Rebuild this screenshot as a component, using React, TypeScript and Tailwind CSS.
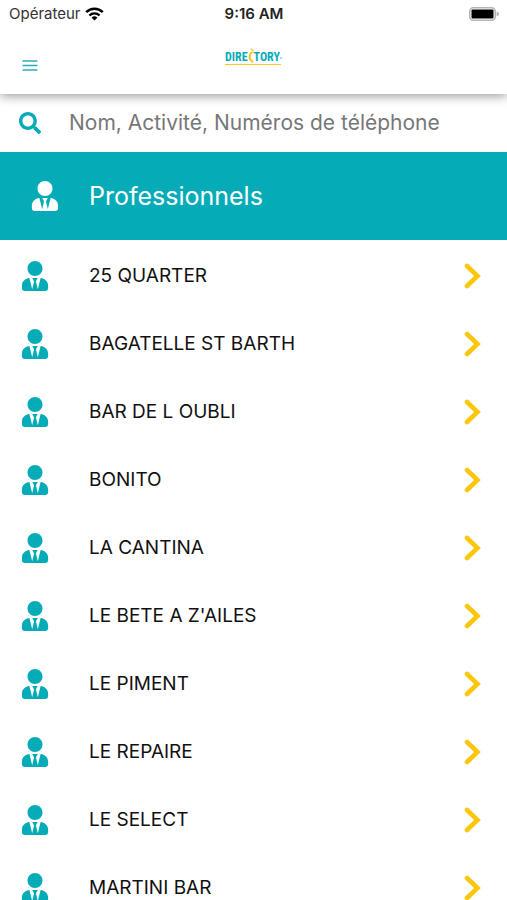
import { FaSearch, FaUserTie } from 'react-icons/fa';

const professionals = [
  '25 QUARTER',
  'BAGATELLE ST BARTH',
  'BAR DE L OUBLI',
  'BONITO',
  'LA CANTINA',
  "LE BETE A Z'AILES",
  'LE PIMENT',
  'LE REPAIRE',
  'LE SELECT',
  'MARTINI BAR',
];

function StatusBar() {
  return (
    <div className="grid h-7 grid-cols-3 items-center pr-2 pl-[9px] text-[15px] leading-5">
      <div className="flex items-center gap-1 text-[#333]">
        <span>Opérateur</span>
        <svg className="h-[14px] w-[19px]" viewBox="0 0 19 14" fill="none">
          <path d="M1.2 5.2a11.8 11.8 0 0116.6 0" stroke="#000" strokeWidth="2.6" />
          <path d="M4.4 8.5a7.2 7.2 0 0110.2 0" stroke="#000" strokeWidth="2.4" />
          <path d="M9.5 13.6L6.6 10.7a4.1 4.1 0 015.8 0z" fill="#000" />
        </svg>
      </div>
      <div className="text-center font-semibold text-[#222]">9:16 AM</div>
      <svg className="h-[14px] w-[30px] justify-self-end" viewBox="0 0 30 14">
        <rect x="0.8" y="0.8" width="25.4" height="12.4" rx="3.5" fill="#fff" stroke="#b5b5b5" strokeWidth="1.6" />
        <rect x="2.5" y="2.5" width="22" height="9" rx="1" fill="#000" />
        <path d="M27.6 4.6c1.6.6 2.4 1.4 2.4 2.4s-.8 1.8-2.4 2.4z" fill="#b5b5b5" />
      </svg>
    </div>
  );
}

function Logo() {
  return (
    <div className="flex flex-col items-center">
      <div className="flex items-end font-['Liberation_Sans_Narrow','Roboto_Condensed',sans-serif] text-[12px] leading-[14px] font-bold text-[#05acb8]">
        <span>DIRE</span>
        <svg className="h-4 w-[6px]" viewBox="0 0 6 16" fill="none">
          <path d="M4.4 4.2C.6 6.2.6 11.4 4.4 13.6" stroke="#fbc524" strokeWidth="2" strokeLinecap="round" />
          <path d="M3 1l2.4 1.6" stroke="#fbc524" strokeWidth="1.2" strokeLinecap="round" />
        </svg>
        <span>TORY</span>
        <svg className="h-[5px] w-0.5 self-center" viewBox="0 0 2 5">
          <circle cx="1" cy="4" r=".7" fill="#05acb8" />
        </svg>
      </div>
      <div className="h-px w-14 bg-[#fbc524]" />
    </div>
  );
}

function ChevronIcon() {
  return (
    <svg className="h-[26px] w-[17px]" viewBox="0 0 17 26" fill="none">
      <path d="M3 3l10.5 10L3 23" stroke="#fdc60b" strokeWidth="4.6" strokeLinecap="round" />
    </svg>
  );
}

export default function App() {
  return (
    <div className="h-screen overflow-hidden bg-white font-[Inter,sans-serif]">
      <header className="relative z-10 bg-white shadow-[0_2px_10px_rgba(0,0,0,0.4)]">
        <StatusBar />
        <div className="grid h-[66px] grid-cols-3 items-start px-[22px]">
          <button type="button" aria-label="Menu" className="mt-8">
            <svg className="h-[11px] w-4" viewBox="0 0 16 11">
              <path d="M.5 1h15M.5 5.5h15M.5 10h15" stroke="#2badb8" strokeWidth="1.4" />
            </svg>
          </button>
          <div className="mt-5">
            <Logo />
          </div>
        </div>
      </header>

      <label className="flex h-[58px] items-center pl-[19px]">
        <FaSearch className="size-[22px] shrink-0 text-[#05acb8]" />
        <input
          type="search"
          aria-label="Recherche"
          placeholder="Nom, Activité, Numéros de téléphone"
          className="ml-7 min-w-0 flex-1 text-[21px] leading-7 outline-none placeholder:text-[#777]"
        />
      </label>

      <h1 className="flex h-[88px] items-center bg-[#05acb8] pl-[31px] text-white">
        <FaUserTie className="h-[30px] w-7" />
        <span className="ml-[30px] text-[25px] leading-8">Professionnels</span>
      </h1>

      <ul className="pt-0.5">
        {professionals.map((name) => (
          <li key={name}>
            <a href="#" className="flex h-[68px] items-center pr-[26px] pl-[21px]">
              <FaUserTie className="h-[30px] w-7 text-[#05acb8]" />
              <span className="ml-10 flex-1 text-[19px] leading-6 text-[#111]">{name}</span>
              <ChevronIcon />
            </a>
          </li>
        ))}
      </ul>
    </div>
  );
}
